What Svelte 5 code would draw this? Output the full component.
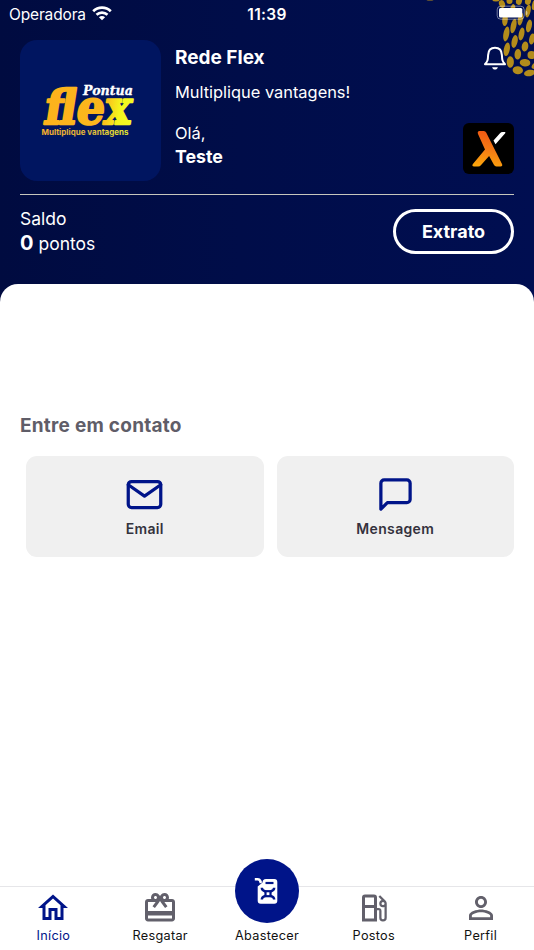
<script>
  // [cx, cy, rx, ry, rotation]
  const scales = [
    [430, -2, 5, 2.6, 0], [496, -1, 4, 2.6, 0], [502, 4, 3, 4, -20], [509.5, 1, 3, 3, 0], [519, 1, 3, 4, 15], [528, 1, 3, 4, 15],
    [505, 20, 2.8, 6, 5], [512.5, 10, 2.6, 6, 12], [520.5, 19, 2.6, 6.5, 12], [528, 11, 2.6, 6.5, 12], [534, 5, 2, 5, 10],
    [506.3, 34, 2.9, 7.5, 10], [513.5, 26, 2.8, 7.5, 12], [521.5, 34, 2.8, 6.5, 12], [529, 26, 2.8, 6.5, 12],
    [506.8, 49.3, 3, 6.8, 10], [514.6, 41.5, 3, 6.5, 12], [532, 39, 2.8, 5.5, 12],
    [510.3, 62, 3.6, 5.8, 0], [517.8, 54.3, 3.3, 5.3, 5], [525, 46.5, 3.3, 5, 8],
    [517.8, 70.2, 5.2, 4, 5], [525, 62.7, 5.3, 3.8, 5], [531.5, 55, 4, 4, 0], [529.5, 73, 5.5, 3.2, -12], [534, 66, 2, 3, 30]
  ];
</script>

<main class="app">
  <header class="hero">
    <svg class="pattern" viewBox="0 0 534 100" aria-hidden="true">
      {#each scales as [cx, cy, rx, ry, r]}
        <ellipse {cx} {cy} {rx} {ry} transform={`rotate(${r} ${cx} ${cy})`} fill="#b38c1b" />
      {/each}
    </svg>
    <div class="status">
      <span class="carrier">Operadora</span>
      <svg class="wifi" width="20" height="15" viewBox="0 0 20 15" fill="none" stroke="#fff" stroke-width="2.7">
        <path d="M1.200 5.200C6.100.5 13.900.5 18.800 5.200M4.500 8.700c3.200-2.900 7.800-2.900 11 0" />
        <path d="M6.900 11.200c1.900-1.700 4.300-1.700 6.200 0L10 14.300z" fill="#fff" stroke="none" />
      </svg>
      <span class="clock">11:39</span>
      <svg class="battery" width="33" height="16" viewBox="0 0 33 16">
        <rect x="1.200" y="1.200" width="27" height="13" rx="3.500" fill="none" stroke="#fff" stroke-opacity=".45" />
        <rect x="3" y="3" width="23.300" height="9.600" rx="1.500" fill="#fff" />
        <path d="M30 5.500c2 1 2 4 0 5z" fill="#fff" fill-opacity=".5" />
      </svg>
    </div>

    <div class="profile">
      <div class="brand">
        <svg width="141" height="141" viewBox="0 0 141 141">
          <defs>
            <linearGradient id="gold" gradientUnits="userSpaceOnUse" x1="0" y1="0" x2="89" y2="0">
              <stop offset="0" stop-color="#fcb21c" /><stop offset=".66" stop-color="#fbb71c" /><stop offset=".84" stop-color="#f4f51d" /><stop offset="1" stop-color="#f2fa24" />
            </linearGradient>
            <linearGradient id="tag" gradientUnits="userSpaceOnUse" x1="22" y1="0" x2="111" y2="0">
              <stop offset="0" stop-color="#fbb02a" /><stop offset=".55" stop-color="#dfb83a" /><stop offset="1" stop-color="#e5f52d" />
            </linearGradient>
          </defs>
          <text class="flex" transform="translate(22.500 84.300) skewX(-9)" x="0" y="0" textLength="87" lengthAdjust="spacingAndGlyphs" fill="url(#gold)" stroke="url(#gold)">flex</text>
          <text class="pontua" x="63" y="55" textLength="50" lengthAdjust="spacingAndGlyphs">Pontua</text>
          <text class="tagline" x="21.500" y="95" textLength="87" lengthAdjust="spacingAndGlyphs" fill="url(#tag)">Multiplique vantagens</text>
        </svg>
      </div>
      <div class="who">
        <h1>Rede Flex</h1>
        <p class="slogan">Multiplique vantagens!</p>
        <p class="hello">Olá,</p>
        <p class="name">Teste</p>
      </div>
      <div class="side">
        <svg class="bell" width="24" height="26" viewBox="0 0 24 26" fill="none" stroke="#fff" stroke-width="2" stroke-linejoin="round">
          <path d="M2 19.200c3-3.400 2.900-4.600 3.100-9.100C5.300 5 8 2.700 12 2.700s6.700 2.300 6.900 7.400c.2 4.500.1 5.700 3.100 9.100z" />
          <path d="M9.100 22.200h5.800c-.5 1.700-1.500 2.300-2.900 2.300s-2.400-.6-2.900-2.300z" fill="#fff" stroke="none" />
        </svg>
        <svg class="mark" width="51" height="51" viewBox="0 0 51 51">
          <defs>
            <linearGradient id="flame" gradientUnits="userSpaceOnUse" x1="26" y1="8" x2="18" y2="44">
              <stop offset="0" stop-color="#ef5712" /><stop offset=".5" stop-color="#f47b15" /><stop offset="1" stop-color="#fca70b" />
            </linearGradient>
          </defs>
          <rect width="51" height="51" rx="6" fill="#000" />
          <path d="M16.500 8h4.300q1.700 0 2.500 1.700L39 41q1 2.300-1.500 2.500h-4q-1.800 0-2.600-1.700l-4.800-8.700-8 8.800q-1.200 1.600-3 1.600h-4q-2.800-.3-1-2.700L22 26.500 15 11q-1-2.600 1.500-3z" fill="url(#flame)" />
          <path d="M30.500 17.500 37 10.200Q38 9 39.700 9H42q.8.300.2 1.200L32.500 21.300z" fill="#fff" />
        </svg>
      </div>
    </div>

    <div class="balance">
      <div class="points">
        <p>Saldo</p>
        <p><b>0</b> pontos</p>
      </div>
      <button class="extrato">Extrato</button>
    </div>
  </header>

  <section class="sheet">
    <h2>Entre em contato</h2>
    <div class="cards">
      <button class="card">
        <svg width="39" height="39" viewBox="0 0 24 24" fill="none" stroke="#001489" stroke-width="2" stroke-linecap="round" stroke-linejoin="round">
          <path d="M4 4h16c1.100 0 2 .9 2 2v12c0 1.100-.9 2-2 2H4c-1.100 0-2-.9-2-2V6c0-1.100.9-2 2-2z" /><path d="M22 6l-10 7L2 6" />
        </svg>
        <span>Email</span>
      </button>
      <button class="card">
        <svg width="39" height="39" viewBox="0 0 24 24" fill="none" stroke="#001489" stroke-width="2" stroke-linecap="round" stroke-linejoin="round">
          <path d="M21 15a2 2 0 0 1-2 2H7l-4 4V5a2 2 0 0 1 2-2h14a2 2 0 0 1 2 2z" />
        </svg>
        <span>Mensagem</span>
      </button>
    </div>
  </section>

  <nav>
    <a class="active" href="#inicio">
      <svg viewBox="0 0 24 24"><path d="M12 5.690l5 4.500V18h-2v-6H9v6H7v-7.810l5-4.500M12 3L2 12h3v8h6v-6h2v6h6v-8h3L12 3z" /></svg>
      <span>Início</span>
    </a>
    <a href="#resgatar">
      <svg viewBox="0 0 24 24"><path d="M20 6h-2.180c.11-.31.18-.65.18-1 0-1.660-1.340-3-3-3-1.050 0-1.960.54-2.500 1.350l-.5.67-.5-.68C10.960 2.540 10.050 2 9 2 7.340 2 6 3.340 6 5c0 .35.07.69.18 1H4c-1.110 0-1.990.89-1.990 2L2 19c0 1.110.89 2 2 2h16c1.110 0 2-.89 2-2V8c0-1.110-.89-2-2-2zm-5-2c.55 0 1 .45 1 1s-.45 1-1 1-1-.45-1-1 .45-1 1-1zM9 4c.55 0 1 .45 1 1s-.45 1-1 1-1-.45-1-1 .45-1 1-1zm11 15H4v-2h16v2zm0-5H4V8h5.080L7 10.830 8.620 12 11 8.760l1-1.360 1 1.360L15.380 12 17 10.830 14.920 8H20v6z" /></svg>
      <span>Resgatar</span>
    </a>
    <a class="fuel" href="#abastecer">
      <i>
        <svg viewBox="0 0 64 64" fill="none">
          <path d="M27.500 23.500q0-3.500 3.500-3.500h8.300q3 0 3 3V41.700q0 3-3 3H25.700q-3 0-3-3V27.500z" fill="#fff" />
          <path d="M19.800 20.200h3q1.600 0 2.200 1.400l1 2.400" stroke="#fff" stroke-width="2.600" />
          <path d="M30.500 24h8" stroke="#001489" stroke-width="2.200" />
          <path d="M26.800 28.800c0 2.200 1.200 3 3.600 3.700M39.200 28.800c0 2.200-1.200 3-3.600 3.700M26.800 40.600c0-2.200 1.200-3 3.600-3.700M39.200 40.600c0-2.200-1.200-3-3.600-3.700" stroke="#001489" stroke-width="2.400" />
          <rect x="30.500" y="32.200" width="5" height="5" stroke="#001489" stroke-width="2.200" />
        </svg>
      </i>
      <span>Abastecer</span>
    </a>
    <a href="#postos">
      <svg viewBox="0 0 24 24"><path d="M19.770 7.230L19.780 7.220L16.060 3.500L15 4.560L17.110 6.670C16.170 7.030 15.500 7.930 15.500 9A2.500 2.500 0 0 0 18 11.500C18.360 11.500 18.690 11.420 19 11.290V18.500A1 1 0 0 1 18 19.500A1 1 0 0 1 17 18.500V14A2 2 0 0 0 15 12H14V5A2 2 0 0 0 12 3H6A2 2 0 0 0 4 5V21H14V13.500H15.500V18.500A2.500 2.500 0 0 0 18 21A2.500 2.500 0 0 0 20.500 18.500V9C20.500 8.310 20.220 7.680 19.770 7.230M12 13.500V19H6V12H12V13.500M12 10H6V5H12V10M18 10A1 1 0 0 1 17 9A1 1 0 0 1 18 8A1 1 0 0 1 19 9A1 1 0 0 1 18 10Z" /></svg>
      <span>Postos</span>
    </a>
    <a href="#perfil">
      <svg viewBox="0 0 24 24"><path d="M12 5.900c1.160 0 2.100.94 2.100 2.100s-.94 2.100-2.100 2.100S9.900 9.160 9.900 8s.94-2.100 2.100-2.100m0 9c2.970 0 6.100 1.460 6.100 2.100v1.100H5.900V17c0-.64 3.130-2.100 6.100-2.100M12 4C9.790 4 8 5.790 8 8s1.790 4 4 4 4-1.790 4-4-1.790-4-4-4zm0 9c-2.670 0-8 1.340-8 4v3h16v-3c0-2.660-5.330-4-8-4z" /></svg>
      <span>Perfil</span>
    </a>
  </nav>
</main>

<style>
  :global(body) { background: #fff; }
  .app {
    width: 534px; height: 950px; display: flex; flex-direction: column; overflow: hidden;
    font-family: Inter, "Liberation Sans", sans-serif; background: #fff;
  }
  .app * { box-sizing: border-box; }
  h1, h2, p { margin: 0; }
  button { font: inherit; cursor: pointer; }
  .hero {
    position: relative; height: 304px; flex: none; color: #fff; padding: 0 20px;
    background: linear-gradient(90deg, #000b40 0%, #000d49 45%, #000e51 100%);
  }
  .pattern { position: absolute; top: 0; left: 0; width: 534px; height: 100px; }
  .status {
    position: relative; height: 28px; margin: 0 -20px; padding: 0 5px 0 9px;
    display: flex; align-items: center; font-size: 15.500px;
  }
  .carrier { width: 83px; letter-spacing: -0.15px; }
  .clock { width: 60px; margin-left: 125px; text-align: center; font-weight: 600; letter-spacing: 0.3px; }
  .wifi { margin-top: -2px; }
  .battery { margin-left: auto; margin-top: -2px; }
  .profile { position: relative; display: flex; padding-top: 12px; height: 166px; }
  .brand { width: 141px; height: 141px; border-radius: 17px; background: #001560; flex: none; }
  .brand svg { display: block; }
  .flex { font: 700 47.500px "DejaVu Serif", serif; stroke-width: 2.3; stroke-linejoin: round; }
  .pontua { font: italic 700 13px "DejaVu Serif", serif; fill: #fff; stroke: #fff; stroke-width: 0.3; }
  .tagline { font: 700 8px Inter, sans-serif; }
  .who { margin-left: 14px; flex: 1; }
  .who h1 { font-size: 19px; line-height: 24px; margin-top: 6px; font-weight: 700; }
  .slogan { font-size: 16.400px; line-height: 24px; margin-top: 10px; }
  .hello { font-size: 16.400px; line-height: 24px; margin-top: 17px; }
  .name { font-size: 17.800px; line-height: 24px; font-weight: 700; }
  .side { display: flex; flex-direction: column; align-items: flex-end; }
  .bell { margin: 5px 7px 0 0; }
  .mark { margin-top: 52px; }
  .balance { border-top: 1px solid #c6c6bd; display: flex; justify-content: space-between; padding-top: 14px; }
  .points { font-size: 17.500px; line-height: 24px; margin-top: -2px; }
  .points b { font-size: 20px; }
  .extrato {
    width: 121px; height: 45px; border: 3px solid #fff; border-radius: 23px; background: none; color: #fff;
    font-size: 18px; font-weight: 700; padding: 0;
  }
  .sheet { position: relative; margin-top: -20px; flex: 1; background: #fff; border-radius: 18px 18px 0 0; padding: 129px 20px 0; }
  .sheet h2 { font-size: 19px; line-height: 24px; font-weight: 650; letter-spacing: 0.25px; color: #5f5d68; padding-top: 1px; }
  .cards { display: flex; gap: 13px; padding-left: 6px; margin-top: 18px; }
  .card {
    flex: 1; height: 101px; border: 0; border-radius: 11px; background: #f0f0f0; color: #34323d; padding: 19px 0 0;
    display: flex; flex-direction: column; align-items: center; font-size: 14px; font-weight: 600; letter-spacing: 0.35px;
  }
  .card span { line-height: 18px; margin-top: 6px; }
  nav { position: relative; height: 64px; flex: none; display: flex; border-top: 1px solid #e6e6e9; background: #fff; }
  nav a {
    flex: 1 0 0; min-width: 0; display: flex; flex-direction: column; align-items: center; padding-top: 2.500px;
    text-decoration: none; color: #111; font-size: 12.700px; letter-spacing: 0.3px;
  }
  nav a > svg { width: 36px; height: 36px; fill: #62606b; flex: none; }
  nav a > span { line-height: 18px; margin-top: 1.500px; }
  nav a.active { color: #001489; }
  nav a.active > svg { fill: #001489; }
  nav i { width: 64px; height: 64px; margin-top: -30.500px; border-radius: 50%; background: #001489; flex: none; }
  nav i svg { display: block; width: 64px; height: 64px; }
  nav a.fuel > span { margin-top: 4px; }
</style>
